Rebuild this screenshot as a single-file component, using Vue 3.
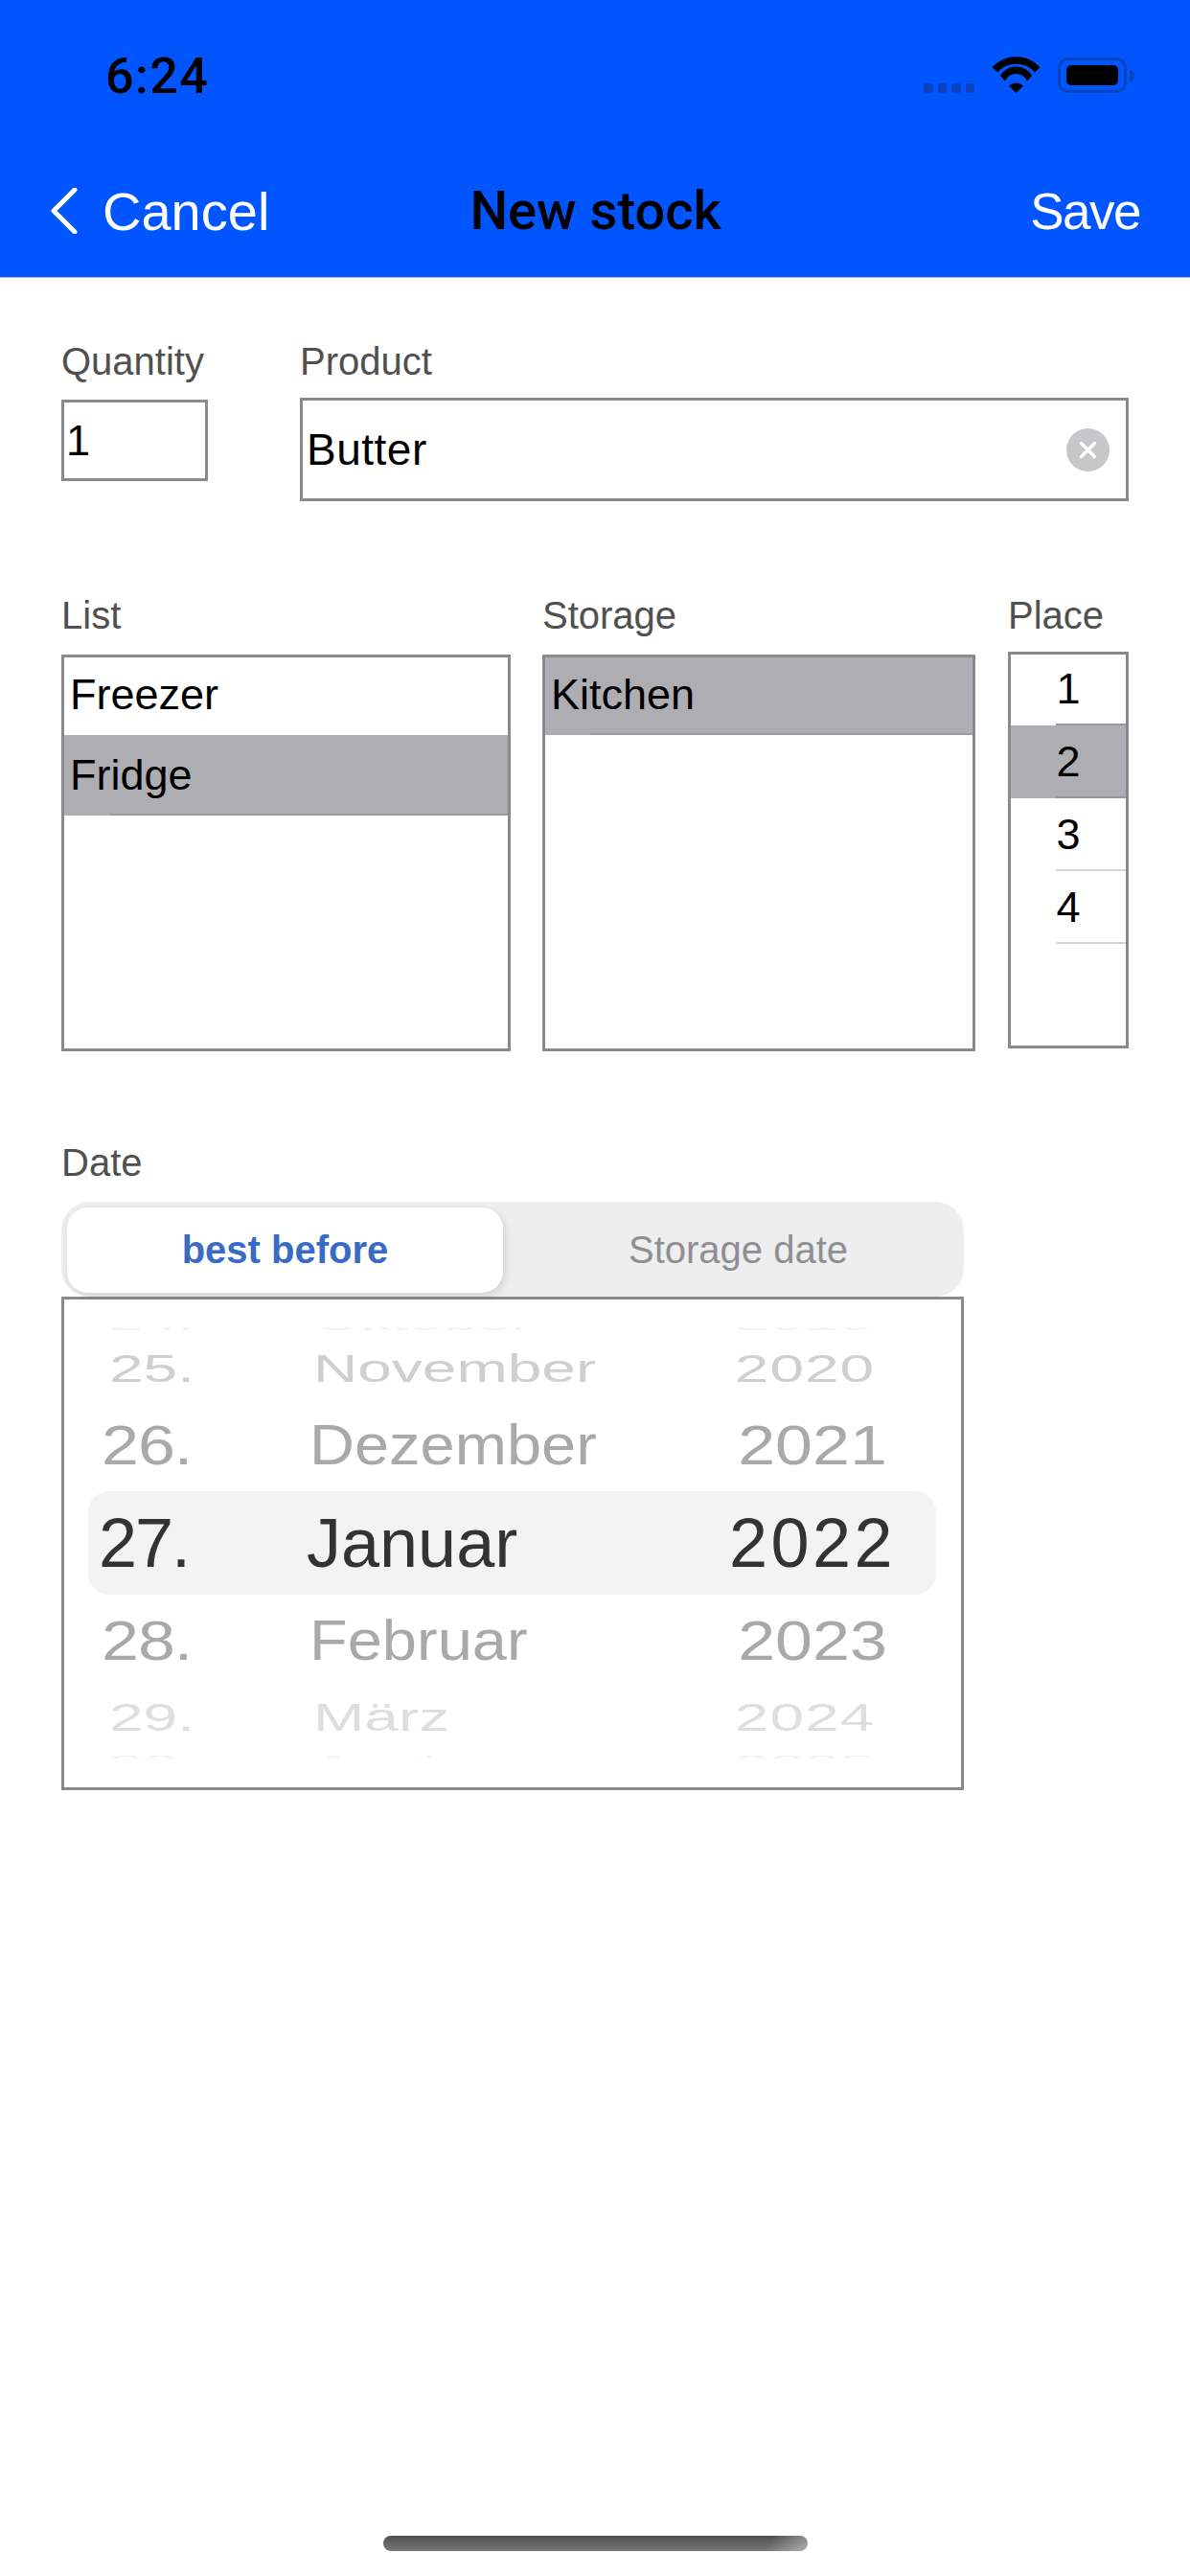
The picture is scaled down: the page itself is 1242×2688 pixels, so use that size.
<template>
  <div class="screen">
    <header class="topbar">
      <div class="status">
        <span class="time">6:24</span>
        <div class="status-icons">
          <div class="signal"><i></i><i></i><i></i><i></i></div>
          <svg class="wifi" width="51" height="38" viewBox="0 0 51 38">
            <path d="M0.5 11 A34 34 0 0 1 50.5 11 L45 16.5 A26 26 0 0 0 6 16.5 Z" />
            <path d="M9 20 A19 19 0 0 1 42 20 L37 25.5 A12.5 12.5 0 0 0 14 25.5 Z" />
            <path d="M18 30.5 Q25.5 24.5 33 30.5 L25.5 38 Z" />
          </svg>
          <div class="battery"><div class="battery-fill"></div></div>
          <div class="battery-nub"></div>
        </div>
      </div>
      <nav class="navbar">
        <div class="nav-left">
          <svg class="chevron" width="28" height="48" viewBox="0 0 28 48">
            <polyline points="25,2 3,24 25,46" />
          </svg>
          <span>Cancel</span>
        </div>
        <div class="nav-title">New stock</div>
        <div class="nav-right">Save</div>
      </nav>
    </header>

    <main class="form">
      <section class="row-top">
        <div class="qty-col">
          <label class="field-label">Quantity</label>
          <div class="qty-input">1</div>
        </div>
        <div class="product-col">
          <label class="field-label tight">Product</label>
          <div class="product-input">
            <span>Butter</span>
            <svg class="clear" width="45" height="45" viewBox="0 0 45 45">
              <circle cx="22.5" cy="22.5" r="22.5" fill="#c7c7c9" />
              <path d="M15.5 15.5 L29.5 29.5 M29.5 15.5 L15.5 29.5" stroke="#fff" stroke-width="3.4" stroke-linecap="round" />
            </svg>
          </div>
        </div>
      </section>

      <section class="row-lists">
        <div class="list-col">
          <label class="field-label list-label">List</label>
          <div class="listbox">
            <div v-for="item in lists" :key="item" class="list-row" :class="{ selected: item === 'Fridge' }">{{ item }}</div>
          </div>
        </div>
        <div class="storage-col">
          <label class="field-label list-label">Storage</label>
          <div class="listbox">
            <div class="list-row selected">Kitchen</div>
          </div>
        </div>
        <div class="place-col">
          <label class="field-label tight">Place</label>
          <div class="listbox place">
            <div v-for="n in places" :key="n" class="place-row" :class="{ selected: n === 2 }">{{ n }}</div>
          </div>
        </div>
      </section>

      <section class="date-block">
        <label class="field-label list-label">Date</label>
        <div class="segment">
          <div class="segment-on">best before</div>
          <div class="segment-off">Storage date</div>
        </div>
        <div class="wheel">
          <div v-for="r in wheelRows" :key="r.year" class="wheel-row" :class="r.cls">
            <span class="day">{{ r.day }}</span>
            <span class="month">{{ r.month }}</span>
            <span class="year">{{ r.year }}</span>
          </div>
        </div>
      </section>
    </main>

    <div class="home-indicator"></div>
  </div>
</template>

<script setup>
const lists = ['Freezer', 'Fridge']
const places = [1, 2, 3, 4]

const wheelRows = [
  { cls: 'far sliver top', day: '24.', month: 'Oktober', year: '2019' },
  { cls: 'far', day: '25.', month: 'November', year: '2020' },
  { cls: 'near before', day: '26.', month: 'Dezember', year: '2021' },
  { cls: 'current', day: '27.', month: 'Januar', year: '2022' },
  { cls: 'near after', day: '28.', month: 'Februar', year: '2023' },
  { cls: 'far faint', day: '29.', month: 'März', year: '2024' },
  { cls: 'far sliver bottom', day: '30.', month: 'April', year: '2025' }
]
</script>

<style scoped>
.screen {
  width: 1242px;
  height: 2688px;
  display: flex;
  flex-direction: column;
  background: #fff;
  font-family: "Liberation Sans", Arial, sans-serif;
  color: #000;
  overflow: hidden;
}

.topbar {
  height: 290px;
  background: #0055ff;
  border-bottom: 1px solid #b4b4b4;
  box-sizing: border-box;
}

.status {
  height: 160px;
  display: flex;
  justify-content: space-between;
  padding: 59px 58px 0 110px;
  box-sizing: border-box;
}

.time {
  font-family: Roboto, "Liberation Sans", sans-serif;
  font-weight: 500;
  font-size: 52px;
  line-height: 42px;
  letter-spacing: 1.5px;
}

.status-icons {
  display: flex;
  align-items: flex-start;
}

.signal {
  display: flex;
  gap: 5px;
  margin-top: 28px;
  margin-right: 18px;
}

.signal i {
  display: block;
  width: 9.5px;
  height: 10px;
  border-radius: 3px;
  background: #0b43bd;
}

.wifi {
  fill: #000;
  margin-right: 18px;
}

.battery {
  width: 72px;
  height: 37px;
  padding: 5px 6px;
  box-sizing: border-box;
  border: 3px solid #0a44bb;
  border-radius: 11px;
  margin-top: 1px;
}

.battery-fill {
  width: 100%;
  height: 100%;
  background: #000;
  border-radius: 5px;
}

.battery-nub {
  width: 5px;
  height: 12px;
  background: #0a44bb;
  border-radius: 0 6px 6px 0;
  margin: 14px 0 0 3px;
}

.navbar {
  display: grid;
  grid-template-columns: 1fr auto 1fr;
  align-items: center;
  height: 120px;
  padding: 0 52px 0 53px;
  font-size: 56px;
  color: #fff;
}

.nav-left {
  display: flex;
  align-items: center;
  gap: 26px;
}

.chevron {
  fill: none;
  stroke: #fff;
  stroke-width: 5px;
  stroke-linecap: round;
  stroke-linejoin: round;
}

.nav-title {
  font-family: Roboto, "Liberation Sans", sans-serif;
  font-weight: 500;
  font-size: 56px;
  color: #000;
}

.nav-right {
  text-align: right;
  font-size: 53px;
  letter-spacing: -1.5px;
}

.form {
  padding: 64px 64px 0;
}

.field-label {
  display: block;
  font-size: 40px;
  line-height: 46px;
  color: #505050;
  margin-bottom: 17px;
}

.field-label.tight {
  margin-bottom: 15px;
}

.list-label {
  margin-bottom: 18px;
}

.row-top {
  display: flex;
  gap: 96px;
}

.qty-col {
  width: 153px;
}

.qty-input {
  height: 85px;
  border: 3px solid #8a8a8e;
  box-sizing: border-box;
  display: flex;
  align-items: center;
  padding-left: 2px;
  font-size: 45px;
}

.product-col {
  flex: 1;
}

.product-input {
  height: 108px;
  border: 3px solid #8a8a8e;
  box-sizing: border-box;
  display: flex;
  align-items: center;
  justify-content: space-between;
  padding: 0 17px 0 4px;
  font-size: 46px;
  letter-spacing: 0.5px;
}

.row-lists {
  display: flex;
  margin-top: 96px;
}

.list-col {
  width: 469px;
  margin-right: 33px;
}

.storage-col {
  width: 452px;
  margin-right: 34px;
}

.place-col {
  width: 126px;
}

.listbox {
  height: 414px;
  border: 3px solid #8a8a8e;
  box-sizing: border-box;
}

.list-row {
  position: relative;
  box-sizing: border-box;
  height: 81px;
  padding: 0 0 3px 6px;
  display: flex;
  align-items: center;
  font-size: 45px;
}

.list-row + .list-row {
  height: 84px;
  padding-bottom: 0;
}

.list-row.selected,
.place-row.selected {
  background: #aeaeb2;
}

.list-row.selected::after,
.place-row::after {
  content: "";
  position: absolute;
  left: 47px;
  right: 0;
  bottom: 0;
  height: 2px;
  background: #9c9ca0;
}

.place-row {
  position: relative;
  height: 76px;
  display: flex;
  align-items: center;
  justify-content: center;
  font-size: 45px;
}

.place-row:first-child {
  height: 74px;
  padding-bottom: 2px;
  box-sizing: border-box;
}

.place-row::after {
  background: #d6d6d9;
}

.place-row:first-child::after,
.place-row.selected::after {
  background: #98989c;
}

.date-block {
  width: 942px;
  margin-top: 93px;
}

.segment {
  height: 99px;
  display: flex;
  background: #eeeeee;
  border-radius: 30px;
  padding: 6px 0 4px 6px;
  box-sizing: border-box;
}

.segment-on {
  width: 455px;
  display: flex;
  align-items: center;
  justify-content: center;
  background: #fff;
  border-radius: 22px;
  box-shadow: 2px 3px 8px rgba(0, 0, 0, 0.12);
  color: #3a6bc4;
  font-size: 40px;
  font-weight: 700;
}

.segment-off {
  flex: 1;
  display: flex;
  align-items: center;
  justify-content: center;
  padding-left: 10px;
  color: #8e8e93;
  font-size: 40px;
}

.wheel {
  height: 515px;
  border: 3px solid #8a8a8e;
  box-sizing: border-box;
  padding-top: 29px;
}

.wheel-row {
  display: grid;
  align-items: center;
}

.wheel-row span {
  display: block;
  white-space: nowrap;
}

.year {
  text-align: center;
}

.far {
  grid-template-columns: 213px 1fr 236px;
  height: 80px;
  padding: 0 45px 0 47px;
  font-size: 64px;
  line-height: 80px;
  color: #cfcfcf;
}

.far span {
  transform: scaleY(0.64);
}

.far .year {
  letter-spacing: 1px;
}

.faint {
  color: #dedede;
}

.sliver {
  height: 3px;
  line-height: 3px;
  overflow: hidden;
  color: #f3f3f3;
}

.sliver.top span {
  transform: translateY(-7px) scaleY(0.4);
}

.sliver.bottom span {
  transform: translateY(7px) scaleY(0.4);
}

.near {
  grid-template-columns: 217px 1fr 236px;
  height: 80px;
  padding: 0 37px 0 39px;
  font-size: 70px;
  line-height: 80px;
  color: #a9a9a9;
}

.near span {
  transform: scaleY(0.82);
}

.near .day {
  letter-spacing: -1px;
}

.near .month {
  font-size: 65px;
  transform: scaleY(0.92);
}

.near.before {
  margin-bottom: 8px;
}

.near.after {
  margin-top: 8px;
}

.current {
  grid-template-columns: 217px 1fr 236px;
  height: 108px;
  margin: 0 26px 0 25px;
  padding: 0 11px 0 11px;
  background: #f3f3f4;
  border-radius: 22px;
  font-size: 72px;
  line-height: 108px;
  color: #333;
}

.current .day {
  letter-spacing: -2px;
}

.current .year {
  letter-spacing: 3.5px;
}

.home-indicator {
  width: 443px;
  height: 16px;
  margin: auto auto 26px;
  border-radius: 8px;
  background:
    linear-gradient(115deg, transparent 90%, rgba(255, 255, 255, 0.4) 100%),
    linear-gradient(#4f4f4f, #787878);
}
</style>
